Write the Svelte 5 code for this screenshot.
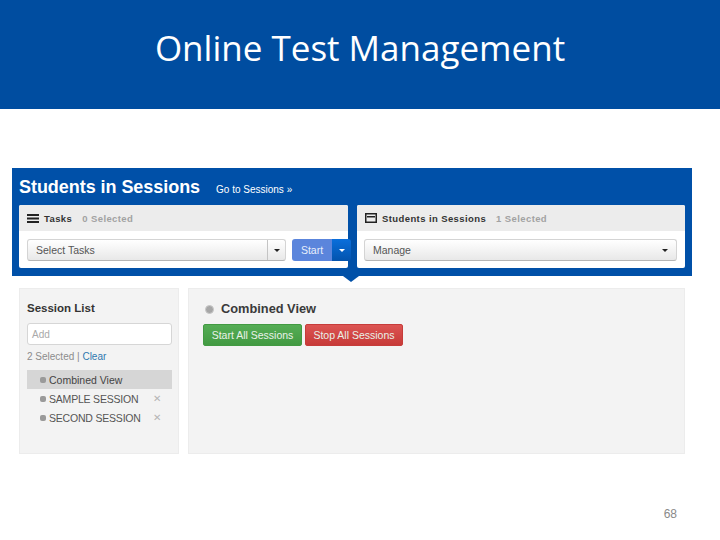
<script>
  const sessions = [
    { name: 'Combined View', active: true },
    { name: 'SAMPLE SESSION', removable: true },
    { name: 'SECOND SESSION', removable: true }
  ];
</script>

<div class="slide">
  <header class="title-bar">
    <h1>Online Test Management</h1>
  </header>

  <section class="shot">
    <div class="blue-band">
      <div class="band-title">
        <h2>Students in Sessions</h2>
        <span class="goto">Go to Sessions »</span>
      </div>
      <div class="panels">
        <div class="panel tasks">
          <div class="panel-head">
            <svg width="12" height="9" viewBox="0 0 12 9"><path d="M0 0h12v2H0zM0 3.5h12v2H0zM0 7h12v2H0z" fill="#222"/></svg>
            <b>Tasks</b>
            <span class="count">0 Selected</span>
          </div>
          <div class="panel-body">
            <div class="select split">
              <span class="select-label">Select Tasks</span>
              <span class="select-caret"><i class="caret"></i></span>
            </div>
            <div class="start-btn">
              <span class="start-label">Start</span>
              <span class="start-caret"><i class="caret white"></i></span>
            </div>
          </div>
        </div>
        <div class="panel students">
          <div class="panel-head">
            <svg width="12" height="10" viewBox="0 0 12 10"><path d="M.75.75h10.5v8.5H.75z" fill="none" stroke="#222" stroke-width="1.5"/><path d="M2 3h8v1.5H2z" fill="#222"/></svg>
            <b>Students in Sessions</b>
            <span class="count">1 Selected</span>
          </div>
          <div class="panel-body">
            <div class="select">
              <span class="select-label">Manage</span>
              <i class="caret"></i>
            </div>
          </div>
        </div>
      </div>
      <i class="pointer"></i>
    </div>

    <div class="lower">
      <aside class="session-list">
        <h3>Session List</h3>
        <div class="add-input">Add</div>
        <p class="selected">2 Selected | <span class="link">Clear</span></p>
        <ul>
          {#each sessions as s}
            <li class:active={s.active}>
              <i class="dot"></i>
              <span class="name">{s.name}</span>
              {#if s.removable}<span class="remove">✕</span>{/if}
            </li>
          {/each}
        </ul>
      </aside>
      <div class="session-view">
        <div class="view-title">
          <i class="status"></i>
          <h3>Combined View</h3>
        </div>
        <div class="actions">
          <span class="btn green">Start All Sessions</span>
          <span class="btn red">Stop All Sessions</span>
        </div>
      </div>
    </div>
  </section>

  <footer class="page-no">68</footer>
</div>

<style>
  :global(body) {
    margin: 0;
    background: #fff;
  }

  .slide {
    width: 720px;
    height: 540px;
    display: flex;
    flex-direction: column;
    overflow: hidden;
    font-family: "Liberation Sans", Arial, sans-serif;
  }

  .title-bar {
    height: 109px;
    flex: none;
    background: #004da0;
    text-align: center;
  }

  .title-bar h1 {
    margin: 0;
    padding-top: 26px;
    font: 400 35px/44px "Open Sans", sans-serif;
    color: #fff;
  }

  .shot {
    margin: 59px 28px 0 12px;
  }

  .blue-band {
    position: relative;
    height: 108px;
    background: #0050a8;
    padding: 0 7px;
    box-sizing: border-box;
  }

  .band-title {
    height: 37px;
    display: flex;
    align-items: baseline;
    gap: 16px;
    padding-top: 7px;
    box-sizing: border-box;
    color: #fff;
  }

  .band-title h2 {
    margin: 0;
    font-size: 18px;
    line-height: 24px;
    font-weight: 700;
    letter-spacing: -0.05px;
  }

  .goto {
    font-size: 10px;
  }

  .panels {
    display: flex;
    gap: 9px;
  }

  .panel {
    height: 63px;
    background: #fff;
    border-radius: 2px;
    overflow: visible;
  }

  .tasks {
    width: 329px;
  }

  .students {
    width: 328px;
  }

  .panel-head {
    height: 26px;
    background: #ececec;
    display: flex;
    align-items: center;
    gap: 5px;
    padding-left: 8px;
    font-size: 9.5px;
    letter-spacing: 0.4px;
    color: #333;
    border-radius: 2px 2px 0 0;
  }

  .panel-head b {
    font-weight: 700;
  }

  .count {
    margin-left: 5px;
    font-weight: 700;
    color: #a2a2a2;
  }

  .panel-body {
    display: flex;
    gap: 6px;
    padding: 8px 7px 0 8px;
  }

  .students .panel-body {
    padding: 8px 8px 0 7px;
  }

  .select {
    flex: 1;
    height: 22px;
    box-sizing: border-box;
    display: flex;
    align-items: center;
    justify-content: space-between;
    padding-left: 8px;
    padding-right: 8px;
    border: 1px solid #d4d4d4;
    border-bottom-color: #b5b5b5;
    border-radius: 3px;
    background: linear-gradient(#fff, #e8e8e8);
    font-size: 10.5px;
    color: #555;
  }

  .select.split {
    padding-right: 0;
  }

  .select-caret {
    width: 17px;
    height: 100%;
    display: flex;
    align-items: center;
    justify-content: center;
    border-left: 1px solid #c4c4c4;
  }

  .caret {
    width: 0;
    height: 0;
    border-left: 3px solid transparent;
    border-right: 3px solid transparent;
    border-top: 3px solid #222;
  }

  .caret.white {
    border-top-color: #fff;
  }

  .start-btn {
    display: flex;
    height: 22px;
    width: 59px;
    flex: none;
    margin-right: -10px;
    border-radius: 3px;
    overflow: hidden;
    position: relative;
    font-size: 10.5px;
    color: #e8eefb;
  }

  .start-label {
    width: 40px;
    background: #5b85dc;
    display: flex;
    align-items: center;
    justify-content: center;
  }

  .start-caret {
    flex: 1;
    background: linear-gradient(#0a6fdc, #0353ad);
    display: flex;
    align-items: center;
    justify-content: center;
  }

  .pointer {
    position: absolute;
    left: 331px;
    bottom: -6px;
    width: 0;
    height: 0;
    border-left: 8px solid transparent;
    border-right: 8px solid transparent;
    border-top: 6px solid #0050a8;
  }

  .lower {
    display: flex;
    gap: 9px;
    margin: 12px 0 0 7px;
    height: 166px;
  }

  .session-list,
  .session-view {
    background: #f3f3f3;
    border: 1px solid #ececec;
    box-sizing: border-box;
  }

  .session-list {
    width: 160px;
    padding: 11px 6px 0 7px;
  }

  .session-list h3 {
    margin: 0;
    font-size: 11.5px;
    line-height: 16px;
    color: #333;
  }

  .add-input {
    height: 22px;
    margin-top: 7px;
    box-sizing: border-box;
    padding: 5px 4px 3px;
    background: #fff;
    border: 1px solid #d6d6d6;
    border-radius: 3px;
    font-size: 10px;
    line-height: 12px;
    color: #a9a9a9;
  }

  .selected {
    margin: 5px 0 0;
    font-size: 10px;
    line-height: 14px;
    color: #8c8c8c;
  }

  .link {
    color: #2f78b0;
  }

  .session-list ul {
    list-style: none;
    margin: 6px 0 0;
    padding: 0;
  }

  .session-list li {
    height: 19px;
    display: flex;
    align-items: center;
    padding-left: 13px;
    font-size: 10.5px;
    color: #555;
  }

  .session-list li.active {
    background: #d6d6d6;
    color: #444;
  }

  .dot {
    width: 6px;
    height: 6px;
    margin-right: 3px;
    border-radius: 2px;
    background: #9a9a9a;
    flex: none;
  }

  .name {
    flex: 1;
    letter-spacing: -0.2px;
  }

  .active .name {
    letter-spacing: 0;
  }

  .remove {
    margin-right: 11px;
    font-size: 10px;
    color: #b5b5b5;
  }

  .session-view {
    width: 497px;
    padding: 12px 14px 0;
  }

  .view-title {
    display: flex;
    align-items: center;
    gap: 7px;
    padding-left: 2px;
  }

  .status {
    width: 7px;
    height: 7px;
    border-radius: 50%;
    background: #a6a6a6;
    border: 1px solid #c8c8c8;
  }

  .view-title h3 {
    margin: 0;
    font-size: 12.8px;
    line-height: 16px;
    color: #3a3a3a;
  }

  .actions {
    display: flex;
    gap: 3px;
    margin-top: 7px;
  }

  .btn {
    height: 22px;
    box-sizing: border-box;
    justify-content: center;
    white-space: nowrap;
    display: flex;
    align-items: center;
    border-radius: 2px;
    font-size: 10.5px;
    color: #e9f2e9;
  }

  .green {
    width: 99px;
    background: linear-gradient(#55ad55, #429a42);
    border: 1px solid #429a42;
  }

  .red {
    width: 98px;
    background: linear-gradient(#dc5452, #c73a38);
    border: 1px solid #c63c3a;
  }

  .page-no {
    margin: 53px 43px 0 0;
    text-align: right;
    font-size: 12px;
    line-height: 14px;
    color: #8a8a8a;
  }
</style>
